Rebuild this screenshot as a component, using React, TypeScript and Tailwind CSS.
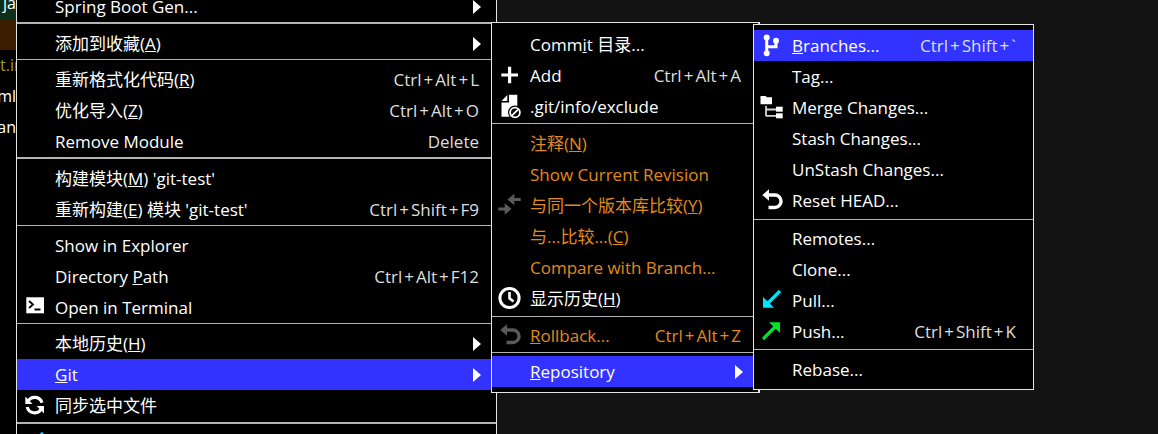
import { Fragment, type ReactNode } from "react";
import { clsx } from "clsx";

const BranchIcon = () => (
  <svg viewBox="0 0 25 25" className="size-[25px]" fill="currentColor" stroke="currentColor">
    <circle cx="6.7" cy="4.5" r="3" stroke="none" />
    <circle cx="6.7" cy="20.3" r="3" stroke="none" />
    <circle cx="16" cy="7.7" r="3" stroke="none" />
    <path d="M6.7 4.5V20.3M16 8V13.7H6.7" fill="none" strokeWidth="3" />
  </svg>
);

const MergeIcon = () => (
  <svg viewBox="0 0 25 25" className="size-[25px]" fill="currentColor">
    <path d="M0.5 1H5.5L7 2.3H12V9.3H0.5Z" />
    <path d="M6 11V21.3M6 14.5H16M6 20.8H16" fill="none" stroke="#d4d4d4" strokeWidth="1.8" />
    <rect x="16" y="11.7" width="6.7" height="5" />
    <rect x="16" y="18.3" width="6.7" height="5" />
  </svg>
);

const UndoIcon = () => (
  <svg viewBox="0 0 25 25" className="size-[25px]" fill="currentColor">
    <path d="M2.3 7L9 1.3V12.7Z" />
    <path d="M8.5 7H14.8A6.2 6.2 0 0 1 14.8 19.5H8.5" fill="none" stroke="currentColor" strokeWidth="3.4" />
  </svg>
);

const PullIcon = () => (
  <svg viewBox="0 0 25 25" className="size-[25px] text-[#00e5ff]" fill="currentColor">
    <path d="M3 9V19.7H14Z" />
    <path d="M20 3L7 16" stroke="currentColor" strokeWidth="3.2" />
  </svg>
);

const PushIcon = () => (
  <svg viewBox="0 0 25 25" className="size-[25px] text-[#00e626]" fill="currentColor">
    <path d="M20 3.2H9L20 14Z" />
    <path d="M3 20L16 7" stroke="currentColor" strokeWidth="3.2" />
  </svg>
);

const PlusIcon = () => (
  <svg viewBox="0 0 25 25" className="size-[25px]" fill="none" stroke="currentColor" strokeWidth="3.2">
    <path d="M3.3 12H20M11.6 3.7V20.3" />
  </svg>
);

const ExcludeIcon = () => (
  <svg viewBox="0 0 25 25" className="size-[25px]" fill="currentColor">
    <path d="M3.5 7L9.3 1V7ZM11 0.7H19.3V22.7H3.5V8.6H11Z" />
    <circle cx="17" cy="18.5" r="7" fill="#000" />
    <circle cx="17" cy="18.5" r="4.9" fill="none" stroke="currentColor" strokeWidth="1.8" />
    <path d="M13.8 21.7L20.2 15.3" stroke="currentColor" strokeWidth="1.8" />
  </svg>
);

const CompareIcon = () => (
  <svg viewBox="0 0 25 25" className="size-[25px]" fill="currentColor">
    <path d="M9.3 6.5L16.3 0.8V4.9H22.7V8.1H16.3V12.2Z" />
    <path d="M13.5 16L6.7 10.3V14.4H0.3V17.6H6.7V21.7Z" />
  </svg>
);

const ClockIcon = () => (
  <svg viewBox="0 0 25 25" className="size-[25px]" fill="none" stroke="currentColor">
    <circle cx="11.5" cy="12" r="9.6" strokeWidth="3" />
    <path d="M11.5 6V12.3L15.5 15.6" strokeWidth="2.6" />
  </svg>
);

const TerminalIcon = () => (
  <svg viewBox="0 0 25 25" className="size-[25px]" fill="none">
    <rect x="3.3" y="2.3" width="17.7" height="16" fill="currentColor" />
    <path d="M6 6L10 9.5L6 13M11.5 14.5H17.5" stroke="#000" strokeWidth="1.8" />
  </svg>
);

const SyncIcon = () => (
  <svg viewBox="0 0 25 25" className="size-[25px]" fill="currentColor">
    <path d="M2.3 3.5V11H9.5ZM21 20.5V13H13.7Z" />
    <path d="M5 8.5A7.6 7.6 0 0 1 19 9.8M18.3 15.8A7.6 7.6 0 0 1 4.2 14" fill="none" stroke="currentColor" strokeWidth="3.2" />
  </svg>
);

const Shortcut = ({ keys }: { keys: string }) => (
  <>
    {keys.split("+").map((key, i) => (
      <Fragment key={key}>
        {i > 0 && <span className="mx-0.5">+</span>}
        {key}
      </Fragment>
    ))}
  </>
);

type ItemProps = {
  children: ReactNode;
  icon?: ReactNode;
  shortcut?: string;
  submenu?: boolean;
  active?: boolean;
  disabled?: boolean;
};

const Item = ({ children, icon, shortcut, submenu, active, disabled }: ItemProps) => (
  <button
    type="button"
    role="menuitem"
    disabled={disabled}
    aria-haspopup={submenu ? "menu" : undefined}
    className={clsx(
      "flex h-[31px] w-full items-center pl-1.5 text-left leading-[31px] whitespace-nowrap",
      active && "bg-[#3333ff]",
      disabled ? "text-[#e08a1e]" : "text-white",
    )}
  >
    <span className={clsx("mr-[7px] size-[25px] shrink-0", disabled && "text-[#5a5a5a]")}>{icon}</span>
    <span className="grow">{children}</span>
    {shortcut && (
      <span className={clsx("mr-[17px]", !disabled && "text-[#dedede]")}>
        <Shortcut keys={shortcut} />
      </span>
    )}
    {submenu && (
      <svg viewBox="0 0 8 14" className="mr-[15px] h-3.5 w-2" fill="currentColor">
        <path d="M0 0L8 7L0 14Z" />
      </svg>
    )}
  </button>
);

const Separator = ({ className }: { className: string }) => (
  <div role="separator" className={clsx("border-[#b4b4b4]", className)} />
);

const App = () => {
  return (
    <main className="relative h-screen overflow-hidden bg-[#131313] font-['Open_Sans','Noto_Sans_CJK_SC',sans-serif] text-[17px] text-white">
      <aside className="flex h-full w-4 flex-col items-end bg-black text-base leading-[31px] whitespace-nowrap">
        <div className="flex h-[19px] w-full items-end justify-end bg-[#0b2f1a]">ja</div>
        <div className="h-[31px] w-full bg-[#3b1e00]" />
        <div className="w-full text-[#a89a20]">t.in</div>
        <div>ml</div>
        <div>an</div>
      </aside>

      <div role="menu" className="absolute -top-[9px] left-4 w-[481px] border-x border-[#e6e6e6] bg-black">
        <Item submenu>Spring Boot Gen...</Item>
        <Separator className="mb-1 border-t-2" />
        <Item submenu>添加到收藏(<u>A</u>)</Item>
        <Separator className="mb-1 border-t" />
        <Item shortcut="Ctrl+Alt+L">重新格式化代码(<u>R</u>)</Item>
        <Item shortcut="Ctrl+Alt+O">优化导入(<u>Z</u>)</Item>
        <Item shortcut="Delete">Remove Module</Item>
        <Separator className="mb-1 border-t-2" />
        <Item>构建模块(<u>M</u>) 'git-test'</Item>
        <Item shortcut="Ctrl+Shift+F9">重新构建(<u>E</u>) 模块 'git-test'</Item>
        <Separator className="mb-1 border-t" />
        <Item>Show in Explorer</Item>
        <Item shortcut="Ctrl+Alt+F12">Directory <u>P</u>ath</Item>
        <Item icon={<TerminalIcon />}>Open in Terminal</Item>
        <Separator className="mb-1 border-t" />
        <Item submenu>本地历史(<u>H</u>)</Item>
        <Item submenu active><u>G</u>it</Item>
        <Item icon={<SyncIcon />}>同步选中文件</Item>
        <Separator className="mt-px mb-[3px] border-t-2" />
        <Item icon={<PullIcon />}>{null}</Item>
      </div>

      <div role="menu" className="absolute top-[22px] left-[491px] w-[269px] border border-r-2 border-[#e6e6e6] bg-black pt-1.5 pb-[5px]">
        <Item>Comm<u>i</u>t 目录...</Item>
        <Item icon={<PlusIcon />} shortcut="Ctrl+Alt+A">Add</Item>
        <Item icon={<ExcludeIcon />}>.git/info/exclude</Item>
        <Separator className="mt-px mb-1 border-t" />
        <Item disabled>注释(<u>N</u>)</Item>
        <Item disabled>Show Current Revision</Item>
        <Item disabled icon={<CompareIcon />}>与同一个版本库比较(<u>Y</u>)</Item>
        <Item disabled>与...比较...(<u>C</u>)</Item>
        <Item disabled>Compare with Branch...</Item>
        <Item icon={<ClockIcon />}>显示历史(<u>H</u>)</Item>
        <Separator className="mt-0.5 mb-[3px] border-t" />
        <Item disabled icon={<UndoIcon />} shortcut="Ctrl+Alt+Z"><u>R</u>ollback...</Item>
        <Separator className="mt-px mb-[3px] border-t" />
        <Item submenu active><u>R</u>epository</Item>
      </div>

      <div role="menu" className="absolute top-6 left-[753px] w-[281px] border border-[#e6e6e6] bg-black pt-[5px] pb-1">
        <Item active icon={<BranchIcon />} shortcut="Ctrl+Shift+`"><u>B</u>ranches...</Item>
        <Item>Tag...</Item>
        <Item icon={<MergeIcon />}>Merge Changes...</Item>
        <Item>Stash Changes...</Item>
        <Item>UnStash Changes...</Item>
        <Item icon={<UndoIcon />}>Reset HEAD...</Item>
        <Separator className="mt-[3px] mb-[3px] border-t" />
        <Item>Remotes...</Item>
        <Item>Clone...</Item>
        <Item icon={<PullIcon />}>Pull...</Item>
        <Item icon={<PushIcon />} shortcut="Ctrl+Shift+K">Push...</Item>
        <Separator className="mt-0.5 mb-1 border-t" />
        <Item>Rebase...</Item>
      </div>
    </main>
  );
};

export default App;
